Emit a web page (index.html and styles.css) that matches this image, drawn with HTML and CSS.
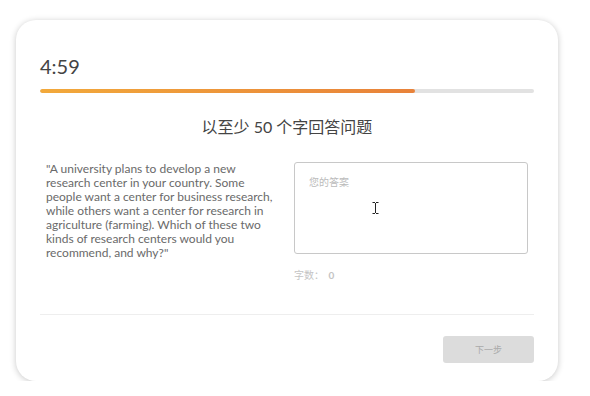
FILE: index.html
```html
<!DOCTYPE html>
<html lang="zh">
    <head>
        <meta charset="utf-8" />
        <meta name="viewport" content="width=device-width, initial-scale=1" />
        <title>写作练习</title>
        <link rel="stylesheet" href="styles.css">
    </head>
    <body>
        <div class="card">
            <div class="timer">4:59</div>
            <div class="progress">
                <div class="progress-fill" style="width: 76%"></div>
            </div>

            <h2 class="title">以至少 50 个字回答问题</h2>

            <div class="columns">
                <p class="prompt">"A university plans to develop a new research center in your country. Some people want a center for business research, while others want a center for research in agriculture (farming). Which of these two kinds of research centers would you recommend, and why?"</p>

                <div class="answer">
                    <div class="answer-box">
                        <span class="placeholder">您的答案</span>
                        <!-- mouse cursor in the screenshot -->
                        <svg class="cursor" width="7" height="12" viewBox="0 0 7 12">
                            <path d="M0.5 0.5h2.5M4 0.5h2.5M3.5 1v10M0.5 11.5h2.5M4 11.5h2.5" stroke="#222" stroke-width="1" fill="none"/>
                        </svg>
                    </div>
                    <div class="word-count">字数： <b>0</b></div>
                </div>
            </div>

            <div class="divider"></div>

            <div class="footer">
                <button class="next-button">下一步</button>
            </div>
        </div>
    </body>
</html>
```

FILE: styles.css
```css
body, html {
    margin: 0;
    padding: 0;
    background: white;
    font-family: Lato, "Noto Sans CJK SC", sans-serif;
}

.card {
    margin: 20px 0 0 16px;
    width: 542px;
    height: 361px;
    box-sizing: border-box;
    padding: 0 24px;
    background-color: white;
    border-radius: 20px;
    box-shadow: 0 1px 6px rgba(0, 0, 0, 0.22);
}

.timer {
    padding-top: 34px;
    font-size: 20px;
    line-height: 24px;
    color: #444;
}

.progress {
    margin-top: 11px;
    height: 4px;
    border-radius: 2px;
    background-color: #e2e2e2;
    overflow: hidden;
}

.progress-fill {
    height: 100%;
    border-radius: 2px;
    background: linear-gradient(to right, #f2a93b, #e8823a);
}

.title {
    margin: 24px 0 0;
    text-align: center;
    font-size: 16px;
    line-height: 20px;
    font-weight: normal;
    color: #444;
}

.columns {
    display: grid;
    grid-template-columns: 1fr 1fr;
    margin-top: 25px;
}

.prompt {
    margin: 0;
    padding: 0 10px 0 6px;
    font-size: 12px;
    line-height: 14px;
    color: #6a6a6a;
}

.answer {
    padding: 0 6px 0 7px;
}

.answer-box {
    position: relative;
    height: 92px;
    box-sizing: border-box;
    padding: 7px 14px;
    border: 1px solid #c8c8c8;
    border-radius: 3px;
}

.placeholder {
    font-size: 10px;
    color: #bbb;
}

.cursor {
    position: absolute;
    left: 77px;
    top: 39px;
}

.word-count {
    margin-top: 13px;
    font-size: 10px;
    color: #c4c4c4;
}

.word-count b {
    margin-left: 2px;
}

.divider {
    margin-top: 32px;
    height: 1px;
    background-color: #eee;
}

.footer {
    display: flex;
    justify-content: flex-end;
    margin-top: 21px;
}

.next-button {
    width: 91px;
    height: 27px;
    border: none;
    border-radius: 3px;
    background-color: #dcdcdc;
    color: #aaa;
    font-family: Lato, "Noto Sans CJK SC", sans-serif;
    font-size: 9px;
}
```
